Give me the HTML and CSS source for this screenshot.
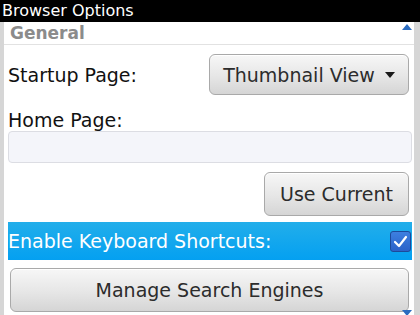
FILE: index.html
```html
<!DOCTYPE html>
<html>
<head>
<meta charset="utf-8">
<link rel="stylesheet" href="styles.css">
</head>
<body>
<div class="titlebar">Browser Options</div>
<div class="screen">
  <div class="panel">
    <div class="section-head">General</div>
    <div class="row startup">
      <span class="label">Startup Page:</span>
      <button class="btn choice">Thumbnail View <span class="caret"></span></button>
    </div>
    <div class="label home">Home Page:</div>
    <div class="input"></div>
    <div class="row end">
      <button class="btn use">Use Current</button>
    </div>
    <div class="row highlight">
      <span class="label">Enable Keyboard Shortcuts:</span>
      <span class="check">
        <svg width="15" height="13" viewBox="0 0 15 13"><path d="M2 7 L6 11 L13 2" fill="none" stroke="#fff" stroke-width="2.2" stroke-linecap="round" stroke-linejoin="round"/></svg>
      </span>
    </div>
    <button class="btn wide">Manage Search Engines</button>
    <span class="scroll up"></span>
    <span class="scroll down"></span>
  </div>
</div>
</body>
</html>
```
FILE: styles.css
```css
html, body {
  margin: 0;
  padding: 0;
  height: 315px;
  overflow: hidden;
  background: #d6d6d6;
  font-family: "DejaVu Sans", sans-serif;
}
.titlebar {
  height: 22px;
  line-height: 22px;
  background: #000;
  color: #fff;
  font-size: 16px;
  padding-left: 2px;
}
.screen {
  display: flex;
  padding: 0 6px 0 4px;
  height: 293px;
}
.panel {
  position: relative;
  flex: 1;
  background: #fff;
  padding: 0 2px 0 4px;
  display: flex;
  flex-direction: column;
}
.section-head {
  height: 22px;
  line-height: 22px;
  font-size: 17px;
  font-weight: bold;
  color: #8b8b8b;
  border-bottom: 1px solid #e2e2e2;
  margin: 0 -2px 0 -4px;
  padding-left: 6px;
}
.row {
  display: flex;
  align-items: center;
}
.label {
  font-size: 19px;
  color: #111;
  line-height: 22px;
}
.startup {
  justify-content: space-between;
  padding-top: 9px;
}
.btn {
  font-family: "DejaVu Sans", sans-serif;
  font-size: 19px;
  color: #2c2c2c;
  background: linear-gradient(#f7f7f7, #e6e6e6 55%, #d5d5d5);
  border: 1px solid #a9a9a9;
  border-radius: 6px;
  padding: 0;
  margin: 0 3px 0 0;
  box-shadow: inset 0 1px 0 #fff;
}
.choice {
  width: 200px;
  height: 41px;
  display: flex;
  align-items: center;
  justify-content: center;
  gap: 10px;
}
.caret {
  width: 0;
  height: 0;
  border-left: 5px solid transparent;
  border-right: 5px solid transparent;
  border-top: 6px solid #1a1a1a;
}
.home {
  margin-top: 14px;
}
.input {
  height: 30px;
  background: #f4f5fa;
  border: 1px solid #dcdde3;
  border-radius: 4px;
}
.end {
  justify-content: flex-end;
  margin-top: 9px;
}
.use {
  width: 145px;
  height: 44px;
}
.highlight {
  margin-top: 6px;
  height: 38px;
  background: linear-gradient(#22aeea, #04a0f1);
  justify-content: space-between;
  padding-right: 1px;
}
.highlight .label {
  color: #fff;
}
.check {
  width: 19px;
  height: 19px;
  border: 1px solid #1d4a9a;
  border-radius: 3px;
  background: linear-gradient(#3d7fe0, #2a62c8);
  display: flex;
  align-items: center;
  justify-content: center;
}
.wide {
  margin: 8px 3px 0 2px;
  height: 44px;
  flex-shrink: 0;
}
.scroll {
  position: absolute;
  right: 2px;
  width: 0;
  height: 0;
  border-left: 5px solid transparent;
  border-right: 5px solid transparent;
}
.scroll.up {
  top: 2px;
  border-bottom: 6px solid #2b6cc0;
}
.scroll.down {
  bottom: -1px;
  border-top: 6px solid #2b6cc0;
}
```
